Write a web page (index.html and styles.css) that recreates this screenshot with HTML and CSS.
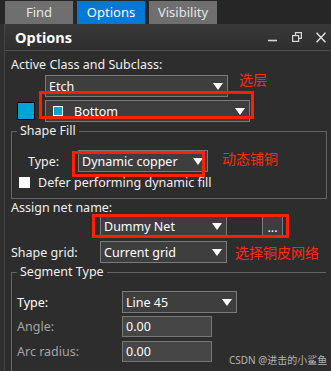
FILE: index.html
```html
<!DOCTYPE html>
<html lang="en">
<head>
    <meta charset="UTF-8">
    <title>Options</title>
    <link rel="stylesheet" href="styles.css">
</head>
<body>
<div class="tabs">
    <div class="tab">Find</div>
    <div class="tab on">Options</div>
    <div class="tab">Visibility</div>
</div>
<div class="panel">
    <div class="head">
        <span class="title">Options</span>
        <div class="wbtns">
            <svg width="10" height="10" viewBox="0 0 10 10"><path d="M0 8.5H9" stroke="#d8d8d8" stroke-width="1.6"/></svg>
            <svg width="10" height="10" viewBox="0 0 10 10" fill="none" stroke="#d8d8d8" stroke-width="1.2"><path d="M3.5 3V0.6H9.4V6.4H7"/><rect x="0.6" y="3.6" width="6" height="5.8"/></svg>
            <svg width="10" height="11" viewBox="0 0 10 11"><path d="M0.5 0.8L9.5 10.2M9.5 0.8L0.5 10.2" stroke="#e0e0e0" stroke-width="1.5"/></svg>
        </div>
    </div>
    <div class="body">
        <div class="lbl">Active Class and Subclass:</div>
        <div class="row r-etch">
            <div class="combo w-etch"><span class="val">Etch</span><i class="arrow"></i></div>
            <span class="note n-etch">选层</span>
        </div>
        <div class="row r-sub">
            <span class="swatch"></span>
            <div class="combo w-sub">
                <span class="mini"></span><span class="val">Bottom</span><i class="arrow"></i>
                <span class="mark m-sub"></span>
            </div>
        </div>
        <fieldset class="group g-fill">
            <legend>Shape Fill</legend>
            <div class="row r-type">
                <span class="lbl-type">Type:</span>
                <div class="combo w-type">
                    <span class="val">Dynamic copper</span><i class="arrow"></i>
                    <span class="mark m-type"></span>
                </div>
                <span class="note n-type">动态铺铜</span>
            </div>
            <div class="row r-check"><span class="check"></span>Defer performing dynamic fill</div>
        </fieldset>
        <div class="lbl lbl-net">Assign net name:</div>
        <div class="row r-net">
            <div class="combo w-net">
                <span class="val">Dummy Net</span><i class="arrow"></i>
                <span class="mark m-net"></span>
            </div>
            <div class="dots">...</div>
        </div>
        <div class="row r-grid">
            <span class="lbl-grid">Shape grid:</span>
            <div class="combo w-net"><span class="val">Current grid</span><i class="arrow"></i></div>
            <span class="note n-grid">选择铜皮网络</span>
        </div>
        <fieldset class="group g-seg">
            <legend>Segment Type</legend>
            <div class="row r-seg">
                <span class="lbl-seg">Type:</span>
                <div class="combo w-seg"><span class="val">Line 45</span><i class="arrow"></i></div>
            </div>
            <div class="row r-seg r-in">
                <span class="lbl-seg off">Angle:</span>
                <div class="field">0.00</div>
            </div>
            <div class="row r-seg r-in2">
                <span class="lbl-seg off">Arc radius:</span>
                <div class="field">0.00</div>
            </div>
        </fieldset>
    </div>
    <div class="wm">CSDN @进击的小鲨鱼</div>
</div>
</body>
</html>
```

FILE: styles.css
```css
body {
    margin: 0;
    width: 331px;
    height: 371px;
    overflow: hidden;
    background: #303030;
    font-family: "Noto Sans", "Noto Sans CJK SC", sans-serif;
    font-size: 12.5px;
    color: #f0f0f0;
}

.tabs {
    display: flex;
    gap: 4px;
    height: 24px;
    padding: 1px 0 0 5px;
    box-sizing: border-box;
    background: #262626;
}

.tab {
    width: 68px;
    height: 23px;
    line-height: 23px;
    text-align: center;
    background: #6f6f6f;
    color: #e6e6e6;
    font-size: 13px;
}

.tab.on {
    background: #0078d7;
    color: #fff;
}

.panel {
    position: relative;
    margin-left: 4px;
    height: 347px;
    border-left: 1px solid #454545;
    background: #2d2d2d;
}

.head {
    display: flex;
    align-items: center;
    height: 26px;
    padding: 0 5px 0 10px;
    border-bottom: 1px solid #4e4e4e;
    background: linear-gradient(#393939, #2e2e2e);
}

.title {
    flex: 1;
    font-size: 14.5px;
    font-weight: bold;
    color: #fff;
}

.wbtns {
    display: flex;
    align-items: center;
    gap: 14px;
}

.body {
    padding: 6px 0 0 6px;
}

.lbl {
    line-height: 15px;
}

.row {
    display: flex;
    align-items: center;
}

.combo {
    position: relative;
    display: flex;
    align-items: center;
    height: 22px;
    box-sizing: border-box;
    padding: 0 4px 0 3px;
    border: 1px solid #7a7a7a;
    background: #3e3e3e;
    color: #fff;
}

.combo .val {
    flex: 1;
    white-space: nowrap;
}

.arrow {
    width: 0;
    height: 0;
    border-left: 5.5px solid transparent;
    border-right: 5.5px solid transparent;
    border-top: 7px solid #fff;
}

.note {
    color: #ff2a12;
    font-size: 14px;
    line-height: 14px;
    font-family: "Noto Sans CJK SC", sans-serif;
}

.mark {
    position: absolute;
    box-sizing: border-box;
    border: 3px solid #ff2000;
}

.r-etch {
    margin: 3px 0 0 34px;
}

.w-etch {
    width: 183px;
}

.n-etch {
    align-self: flex-start;
    margin: -3px 0 0 11px;
}

.r-sub {
    margin-top: 3px;
}

.swatch {
    width: 18px;
    height: 18px;
    margin: 0 10px 0 6px;
    box-sizing: border-box;
    border: 1px solid #000;
    background: #00a3d6;
}

.w-sub {
    width: 205px;
}

.mini {
    width: 10px;
    height: 10px;
    margin: 0 11px 0 4px;
    box-sizing: border-box;
    border: 1px solid #fff;
    background: #00a3d6;
}

.m-sub {
    left: -7px;
    top: -10px;
    width: 215px;
    height: 28px;
}

.group {
    width: 316px;
    margin: 2px 0 0;
    padding: 12px 0 9px 5px;
    box-sizing: border-box;
    border: 1px solid #646464;
}

.group legend {
    padding: 0 3px;
    line-height: 14px;
}

.lbl-type {
    width: 50px;
    margin-left: 11px;
}

.w-type {
    width: 130px;
}

.m-type {
    left: -7px;
    top: 0;
    width: 133px;
    height: 26px;
}

.n-type {
    margin-left: 14px;
    align-self: flex-start;
    margin-top: 1px;
}

.r-check {
    height: 13px;
    margin-top: 4px;
}

.check {
    width: 11px;
    height: 11px;
    margin: 0 8px 0 2px;
    background: #fff;
}

.lbl-net {
    margin-top: 1px;
}

.r-net {
    margin-left: 89px;
}

.w-net {
    width: 127px;
}

.m-net {
    left: -9px;
    top: -2px;
    width: 197px;
    height: 24px;
}

.dots {
    width: 21px;
    height: 22px;
    margin-left: 35px;
    box-sizing: border-box;
    border: 1px solid #7a7a7a;
    background: #3e3e3e;
    text-align: center;
    line-height: 24px;
    color: #fff;
}

.r-grid {
    margin-top: 4px;
}

.lbl-grid {
    width: 89px;
}

.n-grid {
    margin-left: 8px;
}

.g-seg {
    width: 315px;
    border-right: none;
}

.lbl-seg {
    width: 105px;
    color: #fff;
}

.lbl-seg.off {
    color: #a4a4a4;
}

.w-seg {
    width: 115px;
}

.field {
    width: 90px;
    height: 21px;
    line-height: 19px;
    box-sizing: border-box;
    padding-left: 3px;
    border: 1px solid #767676;
    background: #464646;
    color: #fff;
}

.r-in {
    margin-top: 3px;
}

.r-in2 {
    margin-top: 4px;
}

.wm {
    position: absolute;
    left: 224px;
    top: 328px;
    font-size: 10px;
    color: #b4b4b4;
    font-family: "Noto Sans", "Noto Sans CJK SC", sans-serif;
    white-space: nowrap;
}
```
